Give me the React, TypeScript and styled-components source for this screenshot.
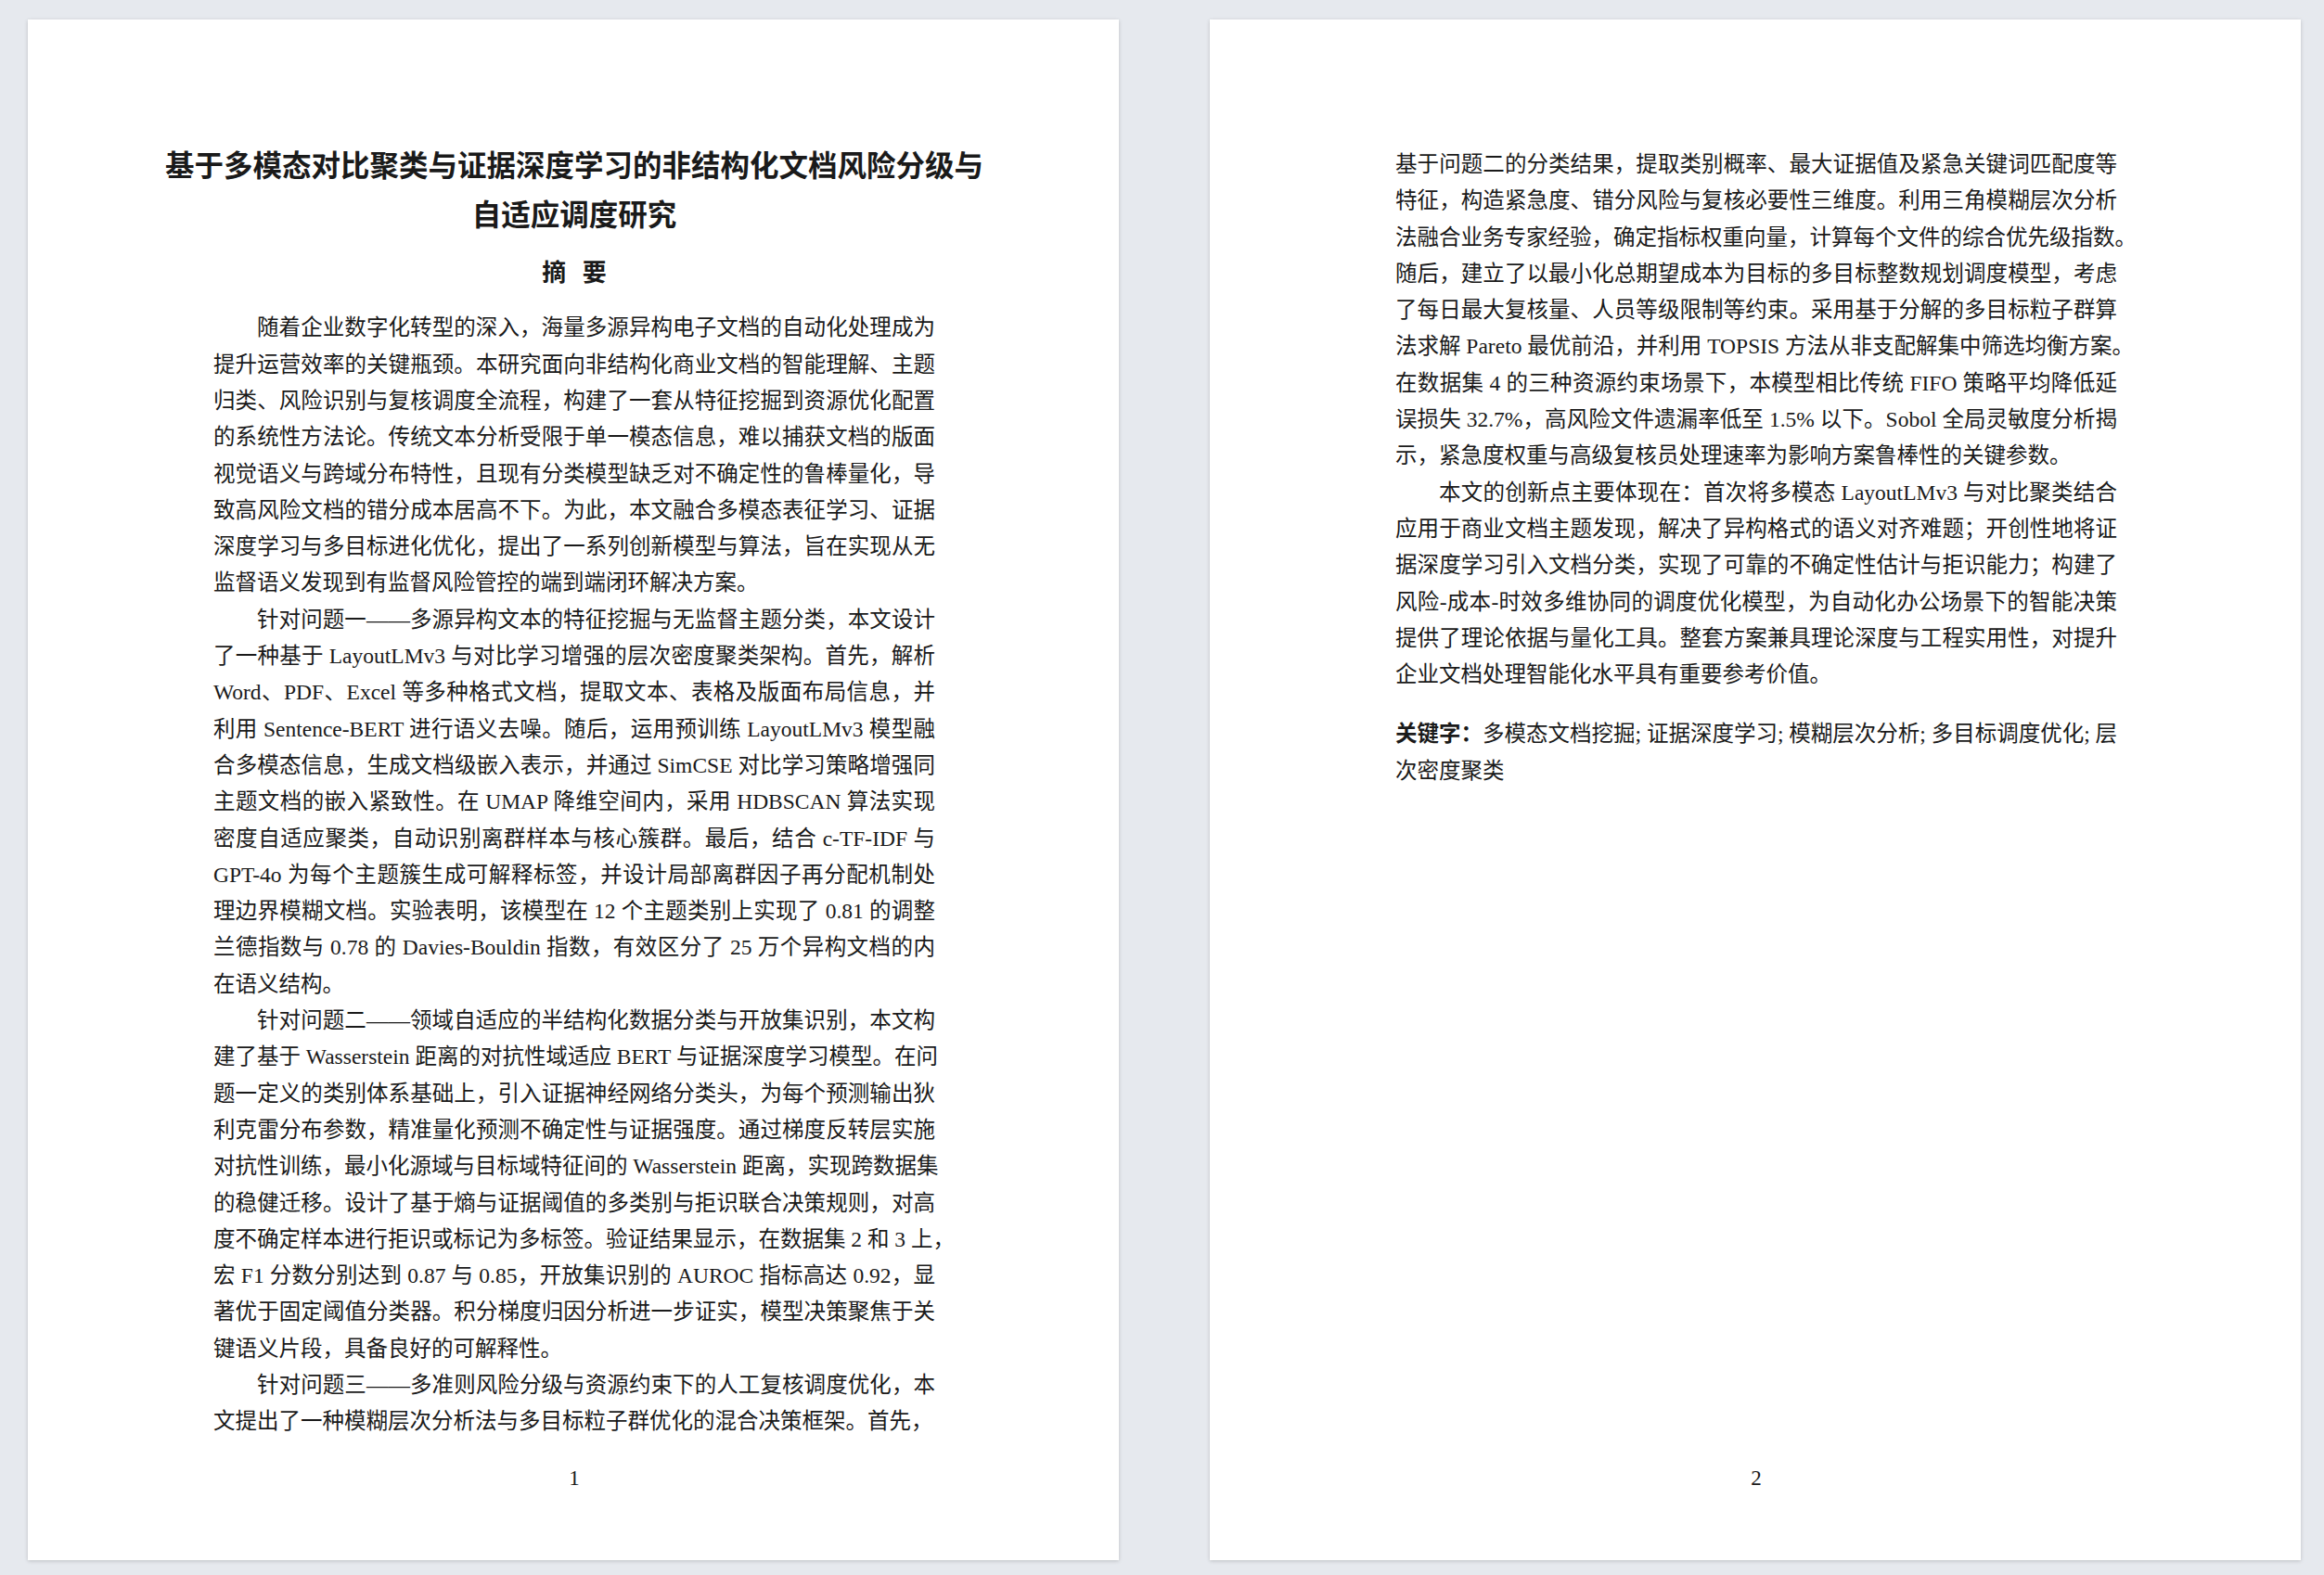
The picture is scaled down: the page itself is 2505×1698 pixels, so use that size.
import styled, { createGlobalStyle } from 'styled-components';

const Global = createGlobalStyle`
  body {
    margin: 0;
    background: #e6e9ee;
  }
`;

const Desk = styled.div`
  display: flex;
  gap: 98px;
  padding: 21px 0 0 30px;
  min-height: 1698px;
  box-sizing: border-box;
`;

const Page = styled.div`
  width: 1176px;
  height: 1661px;
  background: #fff;
  box-shadow: 0 1px 4px rgba(0, 0, 0, 0.18);
  box-sizing: border-box;
  padding: 0 198px 0 200px;
  display: flex;
  flex-direction: column;
  font-family: 'Liberation Serif', 'Noto Sans CJK SC', serif;
  color: #1a1a1a;
`;

const Body = styled.div<{ $top: number }>`
  flex: 1;
  margin-top: ${(p) => p.$top}px;
`;

const Title = styled.h1`
  margin: 129px -80px 0;
  font-family: 'Noto Sans CJK SC', sans-serif;
  font-size: 31.5px;
  line-height: 52.7px;
  font-weight: 700;
  text-align: center;
`;

const Heading = styled.h2`
  margin: 17px 0 0;
  font-family: 'Noto Sans CJK SC', sans-serif;
  font-size: 26px;
  line-height: 40px;
  font-weight: 700;
  text-align: center;
`;

const Para = styled.div<{ $gap?: number }>`
  margin-top: ${(p) => p.$gap ?? 0}px;
  font-size: 23.5px;
  line-height: 39.3px;
  & b {
    font-family: 'Noto Sans CJK SC', sans-serif;
    font-weight: 700;
  }
`;

const Line = styled.div<{ $indent?: boolean; $last?: boolean }>`
  white-space: nowrap;
  text-align: justify;
  text-align-last: ${(p) => (p.$last ? 'left' : 'justify')};
  padding-left: ${(p) => (p.$indent ? '47px' : '0')};
`;

const PageNo = styled.div`
  text-align: center;
  font-size: 23px;
  line-height: 30px;
  margin-bottom: 73px;
`;

function Lines({ lines, indent, gap }: { lines: (string | JSX.Element)[]; indent?: boolean; gap?: number }) {
  return (
    <Para $gap={gap}>
      {lines.map((l, i) => (
        <Line key={i} $indent={indent && i === 0} $last={i === lines.length - 1}>
          {l}
        </Line>
      ))}
    </Para>
  );
}

const p1 = [
  '随着企业数字化转型的深入，海量多源异构电子文档的自动化处理成为',
  '提升运营效率的关键瓶颈。本研究面向非结构化商业文档的智能理解、主题',
  '归类、风险识别与复核调度全流程，构建了一套从特征挖掘到资源优化配置',
  '的系统性方法论。传统文本分析受限于单一模态信息，难以捕获文档的版面',
  '视觉语义与跨域分布特性，且现有分类模型缺乏对不确定性的鲁棒量化，导',
  '致高风险文档的错分成本居高不下。为此，本文融合多模态表征学习、证据',
  '深度学习与多目标进化优化，提出了一系列创新模型与算法，旨在实现从无',
  '监督语义发现到有监督风险管控的端到端闭环解决方案。',
];

const p2 = [
  '针对问题一——多源异构文本的特征挖掘与无监督主题分类，本文设计',
  '了一种基于 LayoutLMv3 与对比学习增强的层次密度聚类架构。首先，解析',
  'Word、PDF、Excel 等多种格式文档，提取文本、表格及版面布局信息，并',
  '利用 Sentence-BERT 进行语义去噪。随后，运用预训练 LayoutLMv3 模型融',
  '合多模态信息，生成文档级嵌入表示，并通过 SimCSE 对比学习策略增强同',
  '主题文档的嵌入紧致性。在 UMAP 降维空间内，采用 HDBSCAN 算法实现',
  '密度自适应聚类，自动识别离群样本与核心簇群。最后，结合 c-TF-IDF 与',
  'GPT-4o 为每个主题簇生成可解释标签，并设计局部离群因子再分配机制处',
  '理边界模糊文档。实验表明，该模型在 12 个主题类别上实现了 0.81 的调整',
  '兰德指数与 0.78 的 Davies-Bouldin 指数，有效区分了 25 万个异构文档的内',
  '在语义结构。',
];

const p3 = [
  '针对问题二——领域自适应的半结构化数据分类与开放集识别，本文构',
  '建了基于 Wasserstein 距离的对抗性域适应 BERT 与证据深度学习模型。在问',
  '题一定义的类别体系基础上，引入证据神经网络分类头，为每个预测输出狄',
  '利克雷分布参数，精准量化预测不确定性与证据强度。通过梯度反转层实施',
  '对抗性训练，最小化源域与目标域特征间的 Wasserstein 距离，实现跨数据集',
  '的稳健迁移。设计了基于熵与证据阈值的多类别与拒识联合决策规则，对高',
  '度不确定样本进行拒识或标记为多标签。验证结果显示，在数据集 2 和 3 上，',
  '宏 F1 分数分别达到 0.87 与 0.85，开放集识别的 AUROC 指标高达 0.92，显',
  '著优于固定阈值分类器。积分梯度归因分析进一步证实，模型决策聚焦于关',
  '键语义片段，具备良好的可解释性。',
];

const p4 = [
  '针对问题三——多准则风险分级与资源约束下的人工复核调度优化，本',
  '文提出了一种模糊层次分析法与多目标粒子群优化的混合决策框架。首先，',
];

const q1 = [
  '基于问题二的分类结果，提取类别概率、最大证据值及紧急关键词匹配度等',
  '特征，构造紧急度、错分风险与复核必要性三维度。利用三角模糊层次分析',
  '法融合业务专家经验，确定指标权重向量，计算每个文件的综合优先级指数。',
  '随后，建立了以最小化总期望成本为目标的多目标整数规划调度模型，考虑',
  '了每日最大复核量、人员等级限制等约束。采用基于分解的多目标粒子群算',
  '法求解 Pareto 最优前沿，并利用 TOPSIS 方法从非支配解集中筛选均衡方案。',
  '在数据集 4 的三种资源约束场景下，本模型相比传统 FIFO 策略平均降低延',
  '误损失 32.7%，高风险文件遗漏率低至 1.5% 以下。Sobol 全局灵敏度分析揭',
  '示，紧急度权重与高级复核员处理速率为影响方案鲁棒性的关键参数。',
];

const q2 = [
  '本文的创新点主要体现在：首次将多模态 LayoutLMv3 与对比聚类结合',
  '应用于商业文档主题发现，解决了异构格式的语义对齐难题；开创性地将证',
  '据深度学习引入文档分类，实现了可靠的不确定性估计与拒识能力；构建了',
  '风险-成本-时效多维协同的调度优化模型，为自动化办公场景下的智能决策',
  '提供了理论依据与量化工具。整套方案兼具理论深度与工程实用性，对提升',
  '企业文档处理智能化水平具有重要参考价值。',
];

const keywords = [
  <>
    <b>关键字：</b>多模态文档挖掘; 证据深度学习; 模糊层次分析; 多目标调度优化; 层
  </>,
  '次密度聚类',
];

export default function App() {
  return (
    <>
      <Global />
      <Desk>
        <Page>
          <Title>
            基于多模态对比聚类与证据深度学习的非结构化文档风险分级与
            <br />
            自适应调度研究
          </Title>
          <Heading>摘&nbsp;&nbsp;&nbsp;要</Heading>
          <Body $top={22}>
            <Lines lines={p1} indent />
            <Lines lines={p2} indent />
            <Lines lines={p3} indent />
            <Lines lines={p4} indent />
          </Body>
          <PageNo>1</PageNo>
        </Page>
        <Page>
          <Body $top={137}>
            <Lines lines={q1} />
            <Lines lines={q2} indent />
            <Lines lines={keywords} gap={23} />
          </Body>
          <PageNo>2</PageNo>
        </Page>
      </Desk>
    </>
  );
}
